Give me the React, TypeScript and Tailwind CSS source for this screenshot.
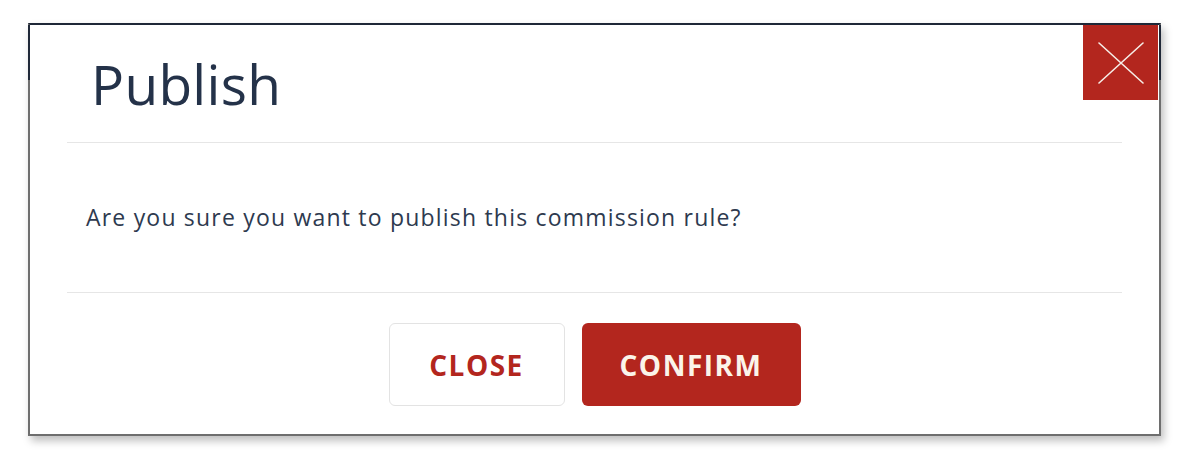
export default function App() {
  return (
    <div className="min-h-[458px] w-[1182px] bg-white pl-[28px] pt-[23px] font-['Open_Sans',sans-serif]">
      <div className="relative flex h-[413px] w-[1133px] flex-col border-2 border-[#6e6e6e] border-t-[#1f2838] bg-white shadow-[3px_5px_8px_rgba(0,0,0,0.25)]">
        <span className="absolute -left-[2px] top-0 h-[55px] w-[2px] bg-[#1f2838]" />
        <span className="absolute -right-[2px] top-0 h-[55px] w-[2px] bg-[#1f2838]" />

        <button className="absolute right-[1px] top-0 flex size-[75px] items-center justify-center bg-[#b3261e]">
          <svg width="46" height="42" viewBox="0 0 46 42" fill="none" stroke="#f6eee8" strokeWidth="1.6" strokeLinecap="round">
            <path d="M1 1L45 41M45 1L1 41" />
          </svg>
        </button>

        <div className="mx-[37px] flex h-[118px] items-center border-b border-[#e6e6e6] pl-[24px]">
          <h1 className="text-[55px] leading-none font-normal tracking-[0.3px] text-[#243249]">Publish</h1>
        </div>

        <div className="mx-[37px] flex h-[150px] items-center border-b border-[#e6e6e6] pl-[19px]">
          <p className="text-[23px] tracking-[1.2px] text-[#2e3a4f]">Are you sure you want to publish this commission rule?</p>
        </div>

        <div className="flex flex-1 items-start justify-center gap-[17px] pt-[30px]">
          <button className="flex h-[83px] w-[176px] items-center justify-center rounded-[6px] border border-[#e3e3e3] bg-white text-[28px] font-bold tracking-[1.5px] text-[#b3261e]">
            CLOSE
          </button>
          <button className="flex h-[83px] w-[219px] items-center justify-center rounded-[6px] bg-[#b3261e] text-[28px] font-bold tracking-[1.5px] text-[#fbf4ea]">
            CONFIRM
          </button>
        </div>
      </div>
    </div>
  );
}
